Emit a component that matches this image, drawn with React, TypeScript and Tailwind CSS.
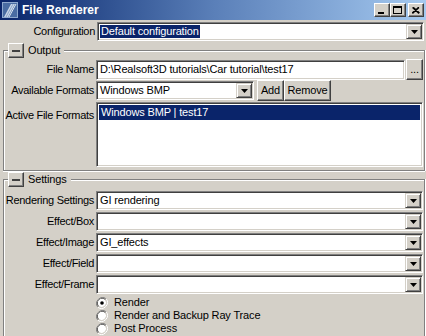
import React from "react";

const sunken =
  "border border-t-[#808080] border-l-[#808080] border-b-white border-r-white shadow-[inset_1px_1px_0_#404040,inset_-1px_-1px_0_#d4d0c8] bg-white";
const raised =
  "border border-t-white border-l-white border-b-[#404040] border-r-[#404040] shadow-[inset_-1px_-1px_0_#808080] bg-[#d4d0c8]";
const raisedCombo =
  "border border-t-[#d4d0c8] border-l-[#d4d0c8] border-b-[#404040] border-r-[#404040] shadow-[inset_1px_1px_0_white,inset_-1px_-1px_0_#808080] bg-[#d4d0c8]";

function Arrow() {
  return (
    <svg width="7" height="4" viewBox="0 0 7 4">
      <polygon points="0,0 7,0 3.5,4" fill="black" />
    </svg>
  );
}

function Combo({ text, selected, className = "" }: { text?: string; selected?: boolean; className?: string }) {
  return (
    <div className={`${sunken} h-[19px] flex items-stretch ${className}`}>
      <div className="flex-1 flex items-center pl-[2px] overflow-hidden">
        {text ? (
          <span className={`leading-[13px] px-[1px] whitespace-nowrap ${selected ? "bg-[#0a246a] text-white" : "text-black"}`}>
            {text}
          </span>
        ) : null}
      </div>
      <div className={`${raisedCombo} w-[16px] my-[1px] mr-[1px] flex items-center justify-center`}>
        <Arrow />
      </div>
    </div>
  );
}

function CollapseBtn() {
  return (
    <div className={`${raised} w-[16px] h-[15px] flex items-center justify-center`}>
      <div className="w-[8px] h-[2px] bg-[#404040]" />
    </div>
  );
}

function GroupHeader({ title }: { title: string }) {
  return (
    <div className="flex h-[15px] items-stretch">
      <div className="self-end h-[8px] w-[5px] border-t border-l border-[#808080] shadow-[inset_1px_1px_0_white]" />
      <CollapseBtn />
      <span className="ml-[4px] mr-[4px] leading-[15px] text-black">{title}</span>
      <div className="self-end flex-1 h-[8px] border-t border-r border-[#808080] shadow-[inset_0_1px_0_white,1px_0_0_white]" />
    </div>
  );
}

function Label({ children }: { children: React.ReactNode }) {
  return <div className="w-[90px] text-right whitespace-nowrap text-black tracking-[-0.3px]">{children}</div>;
}

function Radio({ checked, label }: { checked?: boolean; label: string }) {
  return (
    <div className="flex items-center h-[13px] pl-[92px]">
      <svg width="12" height="12" viewBox="0 0 12 12">
        <path d="M10.2 1.8 A6 6 0 0 0 1.8 10.2" fill="none" stroke="#808080" strokeWidth="1" />
        <path d="M9.5 2.5 A5 5 0 0 0 2.5 9.5" fill="none" stroke="#404040" strokeWidth="1" />
        <circle cx="6" cy="6" r="4.2" fill="white" />
        <path d="M1.8 10.2 A6 6 0 0 0 10.2 1.8" fill="none" stroke="white" strokeWidth="1" />
        <path d="M2.5 9.5 A5 5 0 0 0 9.5 2.5" fill="none" stroke="#d4d0c8" strokeWidth="1" />
        {checked ? <circle cx="6" cy="6" r="1.8" fill="black" /> : null}
      </svg>
      <span className="ml-[6px] text-black leading-[13px]">{label}</span>
    </div>
  );
}

export default function App() {
  return (
    <div className="w-[426px] h-[336px] overflow-hidden bg-[#d4d0c8] font-['Liberation_Sans',Arial,sans-serif] text-[11px] tracking-[-0.15px]">
      {/* Title bar */}
      <div className="h-[20px] flex items-center bg-gradient-to-r from-[#0a246a] via-[#5a7fb8] to-[#a6caf0] pl-[2px] pr-[2px]">
        <svg width="16" height="16" viewBox="0 0 16 16">
          <rect x="0" y="0" width="16" height="16" fill="#4a6ca3" />
          <rect x="0.5" y="0.5" width="15" height="15" fill="none" stroke="#8fa9cf" />
          <polygon points="2,15 9,2 13,2 6,15" fill="#c9d6e8" />
          <line x1="4" y1="15" x2="11" y2="2" stroke="#8aa3c9" strokeWidth="1" />
          <line x1="7" y1="15" x2="14" y2="2" stroke="#dfe8f3" strokeWidth="1" />
        </svg>
        <span className="ml-[4px] text-white font-bold text-[12px] leading-[20px] tracking-normal">File Renderer</span>
        <div className="flex-1" />
        <div className="flex items-center">
          <div className={`${raised} w-[16px] h-[14px] relative`}>
            <div className="absolute left-[3px] top-[8px] w-[6px] h-[2px] bg-black" />
          </div>
          <div className={`${raised} w-[16px] h-[14px] flex items-center justify-center`}>
            <div className="w-[9px] h-[8px] border border-black border-t-2 mr-[1px] mb-[1px]" />
          </div>
          <div className={`${raised} w-[16px] h-[14px] ml-[2px] flex items-center justify-center`}>
            <svg width="8" height="7" viewBox="0 0 8 7">
              <path d="M0.5 0.5 L7 6.5 M1.5 0.5 L7.5 6 M7 0.5 L0.5 6.5 M6.5 0.5 L0 6" stroke="black" strokeWidth="1.2" />
            </svg>
          </div>
        </div>
      </div>

      {/* Configuration */}
      <div className="flex items-center mt-[2px] pr-[2px]">
        <div className="w-[95px] text-right text-black whitespace-nowrap tracking-[-0.3px]">Configuration</div>
        <Combo text="Default configuration" selected className="ml-[2px] flex-1" />
      </div>

      {/* Output group */}
      <div className="mt-[2px] ml-[3px] mr-[1px]">
        <GroupHeader title="Output" />
        <div className="border-l border-r border-b border-[#808080] shadow-[inset_1px_0_0_white,1px_0_0_white,0_1px_0_white] pt-[1px] pb-[3px] pr-[1px]">
          <div className="flex items-center h-[21px]">
            <Label>File Name</Label>
            <div className={`${sunken} ml-[2px] flex-1 h-[20px] flex items-center pl-[3px] whitespace-nowrap overflow-hidden text-black`}>
              D:\Realsoft3D tutorials\Car tutorial\test17
            </div>
            <div className={`${raised} ml-[1px] w-[17px] h-[21px] flex items-center justify-center text-black leading-none`}>
              ...
            </div>
          </div>
          <div className="flex items-center h-[21px]">
            <Label>Available Formats</Label>
            <Combo text="Windows BMP" className="ml-[2px] w-[158px]" />
            <div className={`${raised} ml-[3px] w-[27px] h-[21px] flex items-center justify-center text-black`}>Add</div>
            <div className={`${raised} w-[47px] h-[21px] flex items-center justify-center text-black`}>Remove</div>
          </div>
          <div className="flex items-start mt-[1px]">
            <div className="pt-[5px]">
              <Label>Active File Formats</Label>
            </div>
            <div className={`${sunken} ml-[2px] flex-1 h-[65px] p-[2px]`}>
              <div className="h-[15px] bg-[#0a246a] text-white pl-[2px] leading-[15px] whitespace-nowrap">
                Windows BMP | test17
              </div>
            </div>
          </div>
        </div>
      </div>

      {/* Settings group */}
      <div className="mt-[1px] ml-[3px] mr-[1px]">
        <GroupHeader title="Settings" />
        <div className="border-l border-r border-[#808080] shadow-[inset_1px_0_0_white,1px_0_0_white] pt-[4px] pr-[1px] h-[200px]">
          <div className="flex flex-col gap-[2px]">
            <div className="flex items-center">
              <Label>Rendering Settings</Label>
              <Combo text="GI rendering" className="ml-[2px] flex-1" />
            </div>
            <div className="flex items-center">
              <Label>Effect/Box</Label>
              <Combo className="ml-[2px] flex-1" />
            </div>
            <div className="flex items-center">
              <Label>Effect/Image</Label>
              <Combo text="GI_effects" className="ml-[2px] flex-1" />
            </div>
            <div className="flex items-center">
              <Label>Effect/Field</Label>
              <Combo className="ml-[2px] flex-1" />
            </div>
            <div className="flex items-center">
              <Label>Effect/Frame</Label>
              <Combo className="ml-[2px] flex-1" />
            </div>
          </div>
          <div className="pt-[2px]">
            <Radio checked label="Render" />
            <Radio label="Render and Backup Ray Trace" />
            <Radio label="Post Process" />
          </div>
        </div>
      </div>
    </div>
  );
}
